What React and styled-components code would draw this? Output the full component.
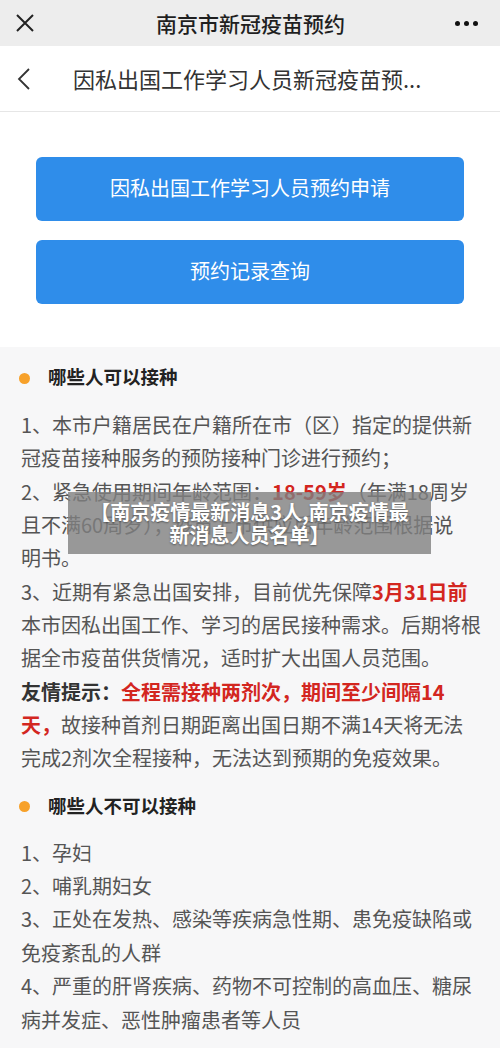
import React from 'react';
import styled, { createGlobalStyle } from 'styled-components';

const GlobalStyle = createGlobalStyle`
  * { box-sizing: border-box; }
  body {
    margin: 0;
    background: #f7f7f8;
    font-family: "Noto Sans CJK SC", "Noto Sans", sans-serif;
  }
`;

const Page = styled.div`
  position: relative;
  width: 500px;
  min-height: 1048px;
  background: #f7f7f8;
`;

const TopBar = styled.div`
  height: 46px;
  background: #ededed;
  display: flex;
  align-items: center;
  justify-content: space-between;
  padding: 0 22px 0 16px;
`;

const TopTitle = styled.div`
  font-size: 21px;
  font-weight: 500;
  color: #1f1f1f;
  margin-left: 12px;
`;

const IconButton = styled.div`
  width: ${p => p.w || 18}px;
  height: 18px;
  display: flex;
  align-items: center;
  justify-content: center;
`;

const Dots = styled.div`
  display: flex;
  gap: 4px;
  span {
    width: 5px;
    height: 5px;
    border-radius: 50%;
    background: #111;
  }
`;

const NavBar = styled.div`
  height: 66px;
  background: #fff;
  border-bottom: 1px solid #e6e6e6;
  display: flex;
  align-items: center;
  padding-left: 17px;
`;

const NavTitle = styled.div`
  font-size: 22px;
  color: #333;
  margin-left: 43px;
  margin-top: -2px;
`;

const ButtonArea = styled.div`
  background: #fff;
  padding: 45px 36px 43px;
  display: flex;
  flex-direction: column;
  gap: 19px;
`;

const BlueButton = styled.div`
  height: 64px;
  border-radius: 6px;
  background: #2f8dea;
  color: #fff;
  font-size: 20px;
  display: flex;
  align-items: center;
  justify-content: center;
  padding-bottom: 3px;
`;

const Content = styled.div`
  padding: 9px 17px 20px 21px;
`;

const SectionHead = styled.div`
  height: 40px;
  display: flex;
  align-items: center;
  margin-left: -2px;
  margin-top: ${p => p.first ? 0 : 10}px;
`;

const Dot = styled.span`
  width: 11px;
  height: 11px;
  border-radius: 50%;
  background: #f7a12a;
  margin-top: 4px;
  margin-right: 18px;
`;

const HeadText = styled.span`
  font-size: 18.5px;
  font-weight: 700;
  color: #222;
`;

const Para = styled.p`
  margin: ${p => p.gap || 12}px 0 0;
  font-size: 20px;
  line-height: 33.35px;
  color: #555;
  white-space: nowrap;
`;

const Red = styled.b`
  color: #d3261f;
  font-weight: 700;
`;

const Strong = styled.b`
  color: #333;
  font-weight: 700;
`;

const Caption = styled.div`
  position: absolute;
  left: 68px;
  top: 492px;
  width: 363px;
  height: 62px;
  background: rgba(128, 128, 128, 0.8);
  padding: 0 20px;
  display: flex;
  align-items: center;
  justify-content: center;
  text-align: center;
  color: #fff;
  font-size: 20px;
  font-weight: 700;
  line-height: 23px;
  text-shadow: 0 1px 2px rgba(0, 0, 0, 0.4);
`;

export default function App() {
  return (
    <Page>
      <GlobalStyle />
      <TopBar>
        <IconButton>
          <svg width="18" height="18" viewBox="0 0 18 18">
            <path d="M1 1 L17 17 M17 1 L1 17" stroke="#222" strokeWidth="2" fill="none" />
          </svg>
        </IconButton>
        <TopTitle>南京市新冠疫苗预约</TopTitle>
        <Dots><span /><span /><span /></Dots>
      </TopBar>

      <NavBar>
        <IconButton w={13}>
          <svg width="13" height="22" viewBox="0 0 13 22">
            <polyline points="12,1 2,11 12,21" stroke="#333" strokeWidth="1.8" fill="none" />
          </svg>
        </IconButton>
        <NavTitle>因私出国工作学习人员新冠疫苗预...</NavTitle>
      </NavBar>

      <ButtonArea>
        <BlueButton>因私出国工作学习人员预约申请</BlueButton>
        <BlueButton>预约记录查询</BlueButton>
      </ButtonArea>

      <Content>
        <SectionHead first>
          <Dot />
          <HeadText>哪些人可以接种</HeadText>
        </SectionHead>
        <Para>
          1、本市户籍居民在户籍所在市（区）指定的提供新<br />
          冠疫苗接种服务的预防接种门诊进行预约；<br />
          2、紧急使用期间年龄范围：<Red>18-59岁</Red>（年满18周岁<br />
          且不满60周岁）；疫苗上市供应后年龄范围根据说<br />
          明书。<br />
          3、近期有紧急出国安排，目前优先保障<Red>3月31日前</Red><br />
          本市因私出国工作、学习的居民接种需求。后期将根<br />
          据全市疫苗供货情况，适时扩大出国人员范围。<br />
          <Strong>友情提示：</Strong><Red>全程需接种两剂次，期间至少间隔14</Red><br />
          <Red>天，</Red>故接种首剂日期距离出国日期不满14天将无法<br />
          完成2剂次全程接种，无法达到预期的免疫效果。
        </Para>

        <SectionHead>
          <Dot />
          <HeadText>哪些人不可以接种</HeadText>
        </SectionHead>
        <Para gap={11}>
          1、孕妇<br />
          2、哺乳期妇女<br />
          3、正处在发热、感染等疾病急性期、患免疫缺陷或<br />
          免疫紊乱的人群<br />
          4、严重的肝肾疾病、药物不可控制的高血压、糖尿<br />
          病并发症、恶性肿瘤患者等人员
        </Para>
      </Content>

      <Caption>【南京疫情最新消息3人,南京疫情最新消息人员名单】</Caption>
    </Page>
  );
}
